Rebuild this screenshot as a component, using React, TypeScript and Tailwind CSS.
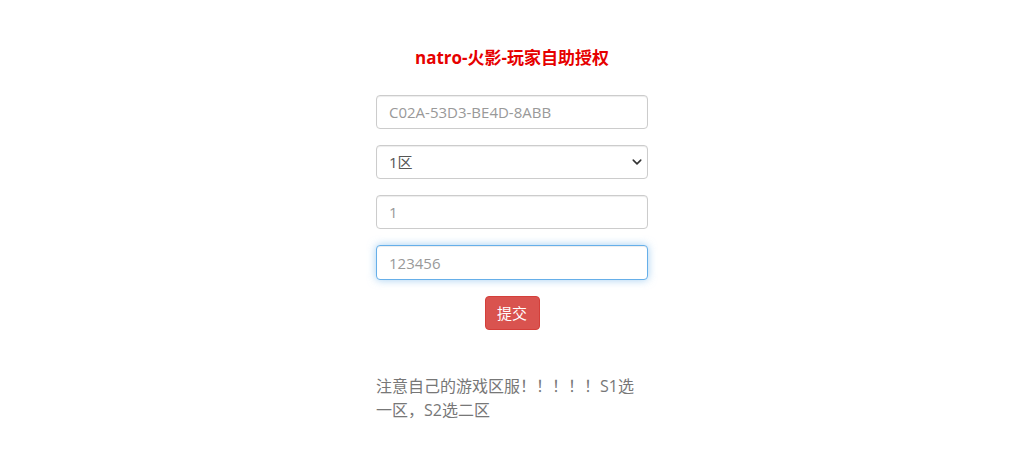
const font = "font-['Open_Sans','Noto_Sans_CJK_SC',sans-serif]";

const fieldClass =
  "block h-[34px] w-full rounded border border-[#ccc] bg-white px-3 text-[15px] text-[#555] shadow-[inset_0_1px_1px_rgba(0,0,0,0.075)] outline-none placeholder:text-[#999]";

export default function App() {
  return (
    <div className={`min-h-screen bg-white ${font}`}>
      <div className="mx-auto w-[272px] pt-[46px]">
        <h1 className="mb-[26px] text-center text-[17px] font-bold leading-[23px] text-[#e60000]">
          natro-火影-玩家自助授权
        </h1>

        <form className="flex flex-col gap-4" onSubmit={(e) => e.preventDefault()}>
          <input className={fieldClass} placeholder="C02A-53D3-BE4D-8ABB" />
          <div className="relative">
            <select
              className={`${fieldClass} appearance-none`}
              defaultValue="1"
            >
              <option value="1">1区</option>
              <option value="2">2区</option>
            </select>
            <svg
              className="pointer-events-none absolute right-[6px] top-1/2 h-[10px] w-[10px] -translate-y-1/2 text-[#333]"
              viewBox="0 0 16 16"
              fill="none"
              stroke="currentColor"
              strokeWidth="2.5"
              strokeLinecap="round"
              strokeLinejoin="round"
            >
              <path d="M2 5l6 6 6-6" />
            </svg>
          </div>
          <input className={fieldClass} placeholder="1" />
          <input
            className="block h-[35px] w-full rounded border border-[#66afe9] bg-white px-3 text-[15px] text-[#555] shadow-[inset_0_1px_1px_rgba(0,0,0,0.075),0_0_8px_rgba(102,175,233,0.6)] outline-none placeholder:text-[#999]"
            placeholder="123456"
          />
          <div className="flex justify-center">
            <button
              type="submit"
              className="h-[34px] w-[55px] rounded border border-[#d43f3a] bg-[#d9534f] text-[15px] text-white"
            >
              提交
            </button>
          </div>
        </form>

        <p className="mt-[44px] text-[16px] leading-[24px] text-[#777]">
          注意自己的游戏区服！！！！！S1选一区，S2选二区
        </p>
      </div>
    </div>
  );
}
